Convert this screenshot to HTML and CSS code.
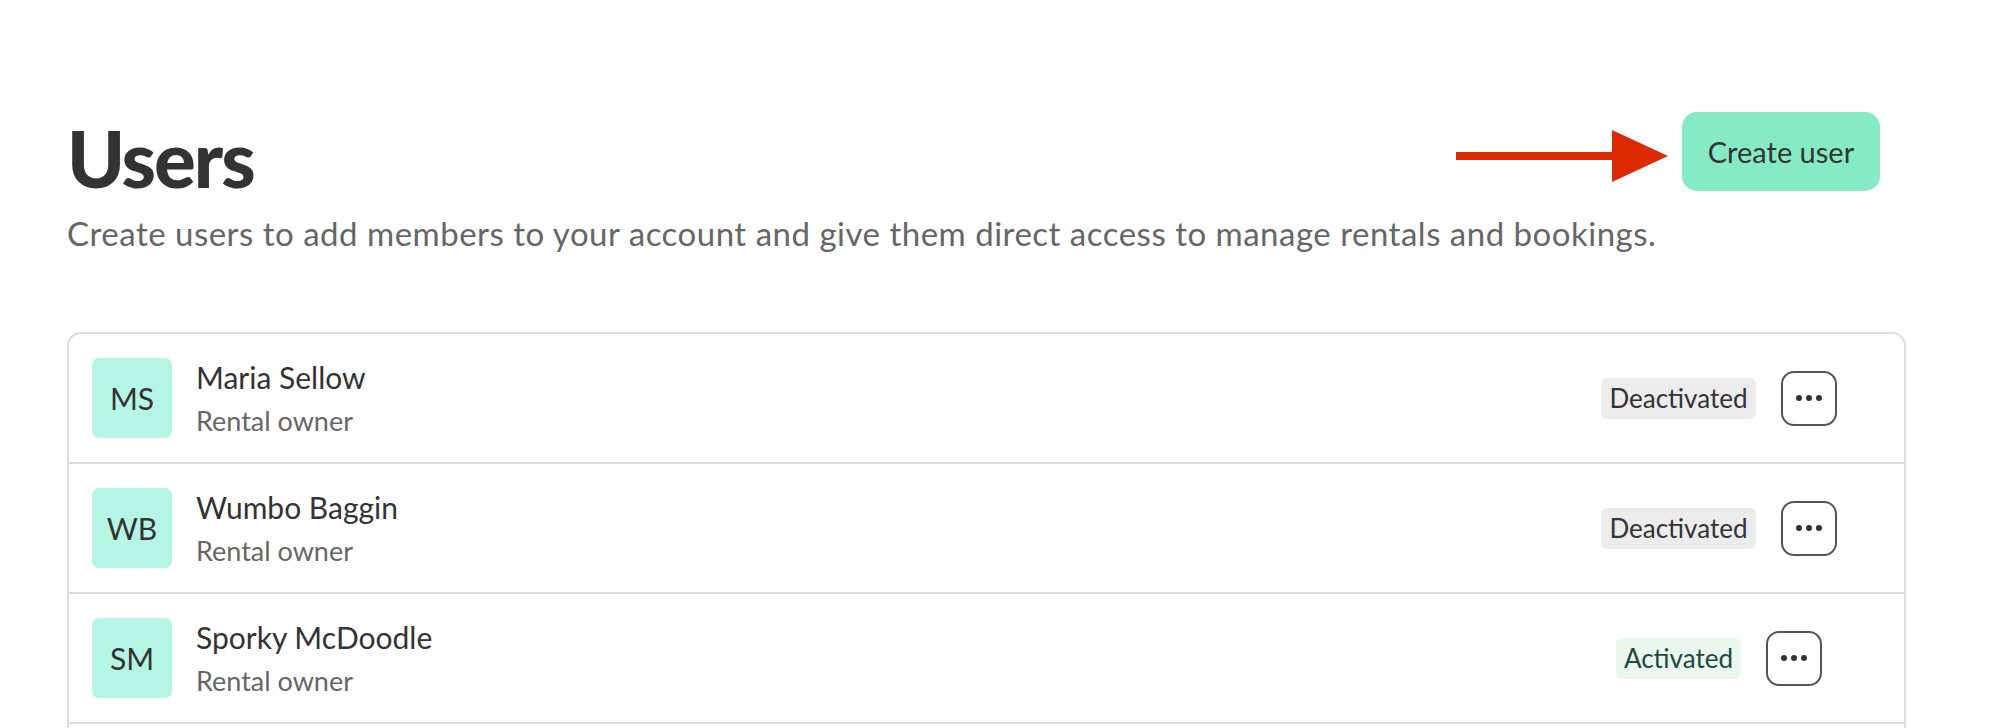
FILE: index.html
```html
<!DOCTYPE html>
<html lang="en">
<head>
<meta charset="utf-8">
<title>Users</title>
<link rel="stylesheet" href="styles.css">
</head>
<body>
<main class="page">
  <header class="header">
    <div class="intro">
      <h1 class="title">Users</h1>
      <p class="subtitle">Create users to add members to your account and give them direct access to manage rentals and bookings.</p>
    </div>
    <div class="actions">
      <svg class="arrow" width="212" height="52" viewBox="0 0 212 52" aria-hidden="true">
        <rect x="0" y="22" width="160" height="8" fill="#dc2a04"/>
        <polygon points="156,0 212,26 156,52" fill="#dc2a04"/>
      </svg>
      <button class="btn-create" type="button">Create user</button>
    </div>
  </header>

  <section class="list">
    <div class="row">
      <div class="avatar">MS</div>
      <div class="info">
        <div class="name">Maria Sellow</div>
        <div class="role">Rental owner</div>
      </div>
      <div class="status">
        <span class="badge badge-off">Deactivated</span>
        <button class="more" type="button" aria-label="More"><span class="dot"></span><span class="dot"></span><span class="dot"></span></button>
      </div>
    </div>
    <div class="row">
      <div class="avatar">WB</div>
      <div class="info">
        <div class="name">Wumbo Baggin</div>
        <div class="role">Rental owner</div>
      </div>
      <div class="status">
        <span class="badge badge-off">Deactivated</span>
        <button class="more" type="button" aria-label="More"><span class="dot"></span><span class="dot"></span><span class="dot"></span></button>
      </div>
    </div>
    <div class="row">
      <div class="avatar">SM</div>
      <div class="info">
        <div class="name">Sporky McDoodle</div>
        <div class="role">Rental owner</div>
      </div>
      <div class="status">
        <span class="badge badge-on">Activated</span>
        <button class="more" type="button" aria-label="More"><span class="dot"></span><span class="dot"></span><span class="dot"></span></button>
      </div>
    </div>
  </section>
</main>
</body>
</html>
```

FILE: styles.css
```css
* { box-sizing: border-box; }

html, body {
  margin: 0;
  padding: 0;
  background: #ffffff;
  overflow: hidden;
}

body {
  font-family: Lato, "Noto Sans", "Liberation Sans", sans-serif;
  color: #333333;
}

.page {
  padding: 112px 90px 0 67px;
}

.header {
  display: flex;
  justify-content: space-between;
  align-items: flex-start;
  padding-right: 26px;
}

.title {
  margin: 6px 0 0 0;
  font-size: 78px;
  line-height: 80px;
  font-weight: 900;
  letter-spacing: -2px;
  color: #333333;
}

.subtitle {
  margin: 15px 0 0 0;
  font-size: 33px;
  line-height: 40px;
  color: #666666;
  letter-spacing: 0.5px;
}

.actions {
  position: relative;
  display: flex;
  align-items: center;
}

.arrow {
  position: absolute;
  right: 100%;
  top: 18px;
  margin-right: 14px;
}

.btn-create {
  width: 198px;
  height: 79px;
  border: none;
  border-radius: 15px;
  background: #86eac5;
  color: #333333;
  font-family: Lato, "Noto Sans", "Liberation Sans", sans-serif;
  font-size: 29px;
  padding: 0;
  cursor: pointer;
}

.list {
  margin-top: 79px;
  padding-bottom: 60px;
  border: 2px solid #dddddd;
  border-radius: 14px;
  overflow: hidden;
}

.row {
  display: flex;
  align-items: center;
  height: 130px;
  padding: 0 0 0 23px;
  border-bottom: 2px solid #dddddd;
}

.avatar {
  width: 80px;
  height: 80px;
  flex: 0 0 80px;
  border-radius: 7px;
  background: #b5f5e3;
  color: #333333;
  font-size: 30px;
  display: flex;
  align-items: center;
  justify-content: center;
}

.info {
  flex: 1;
  margin-left: 24px;
  display: flex;
  flex-direction: column;
  gap: 9px;
}

.name {
  font-size: 30px;
  line-height: 36px;
  color: #333333;
}

.role {
  font-size: 27px;
  line-height: 34px;
  color: #666666;
}

.status {
  width: 370px;
  flex: 0 0 370px;
  display: flex;
  align-items: center;
  justify-content: center;
  gap: 25px;
}

.badge {
  display: inline-flex;
  align-items: center;
  height: 41px;
  padding: 0 8px;
  border-radius: 6px;
  font-size: 26px;
}

.badge-off {
  background: #ececec;
  color: #333333;
}

.badge-on {
  background: #eaf7ee;
  color: #1d4a3e;
}

.more {
  width: 56px;
  height: 55px;
  border: 2px solid #555555;
  border-radius: 13px;
  background: #ffffff;
  display: flex;
  align-items: center;
  justify-content: center;
  gap: 4px;
  padding: 0;
}

.dot {
  width: 6px;
  height: 6px;
  border-radius: 50%;
  background: #333333;
}
```
